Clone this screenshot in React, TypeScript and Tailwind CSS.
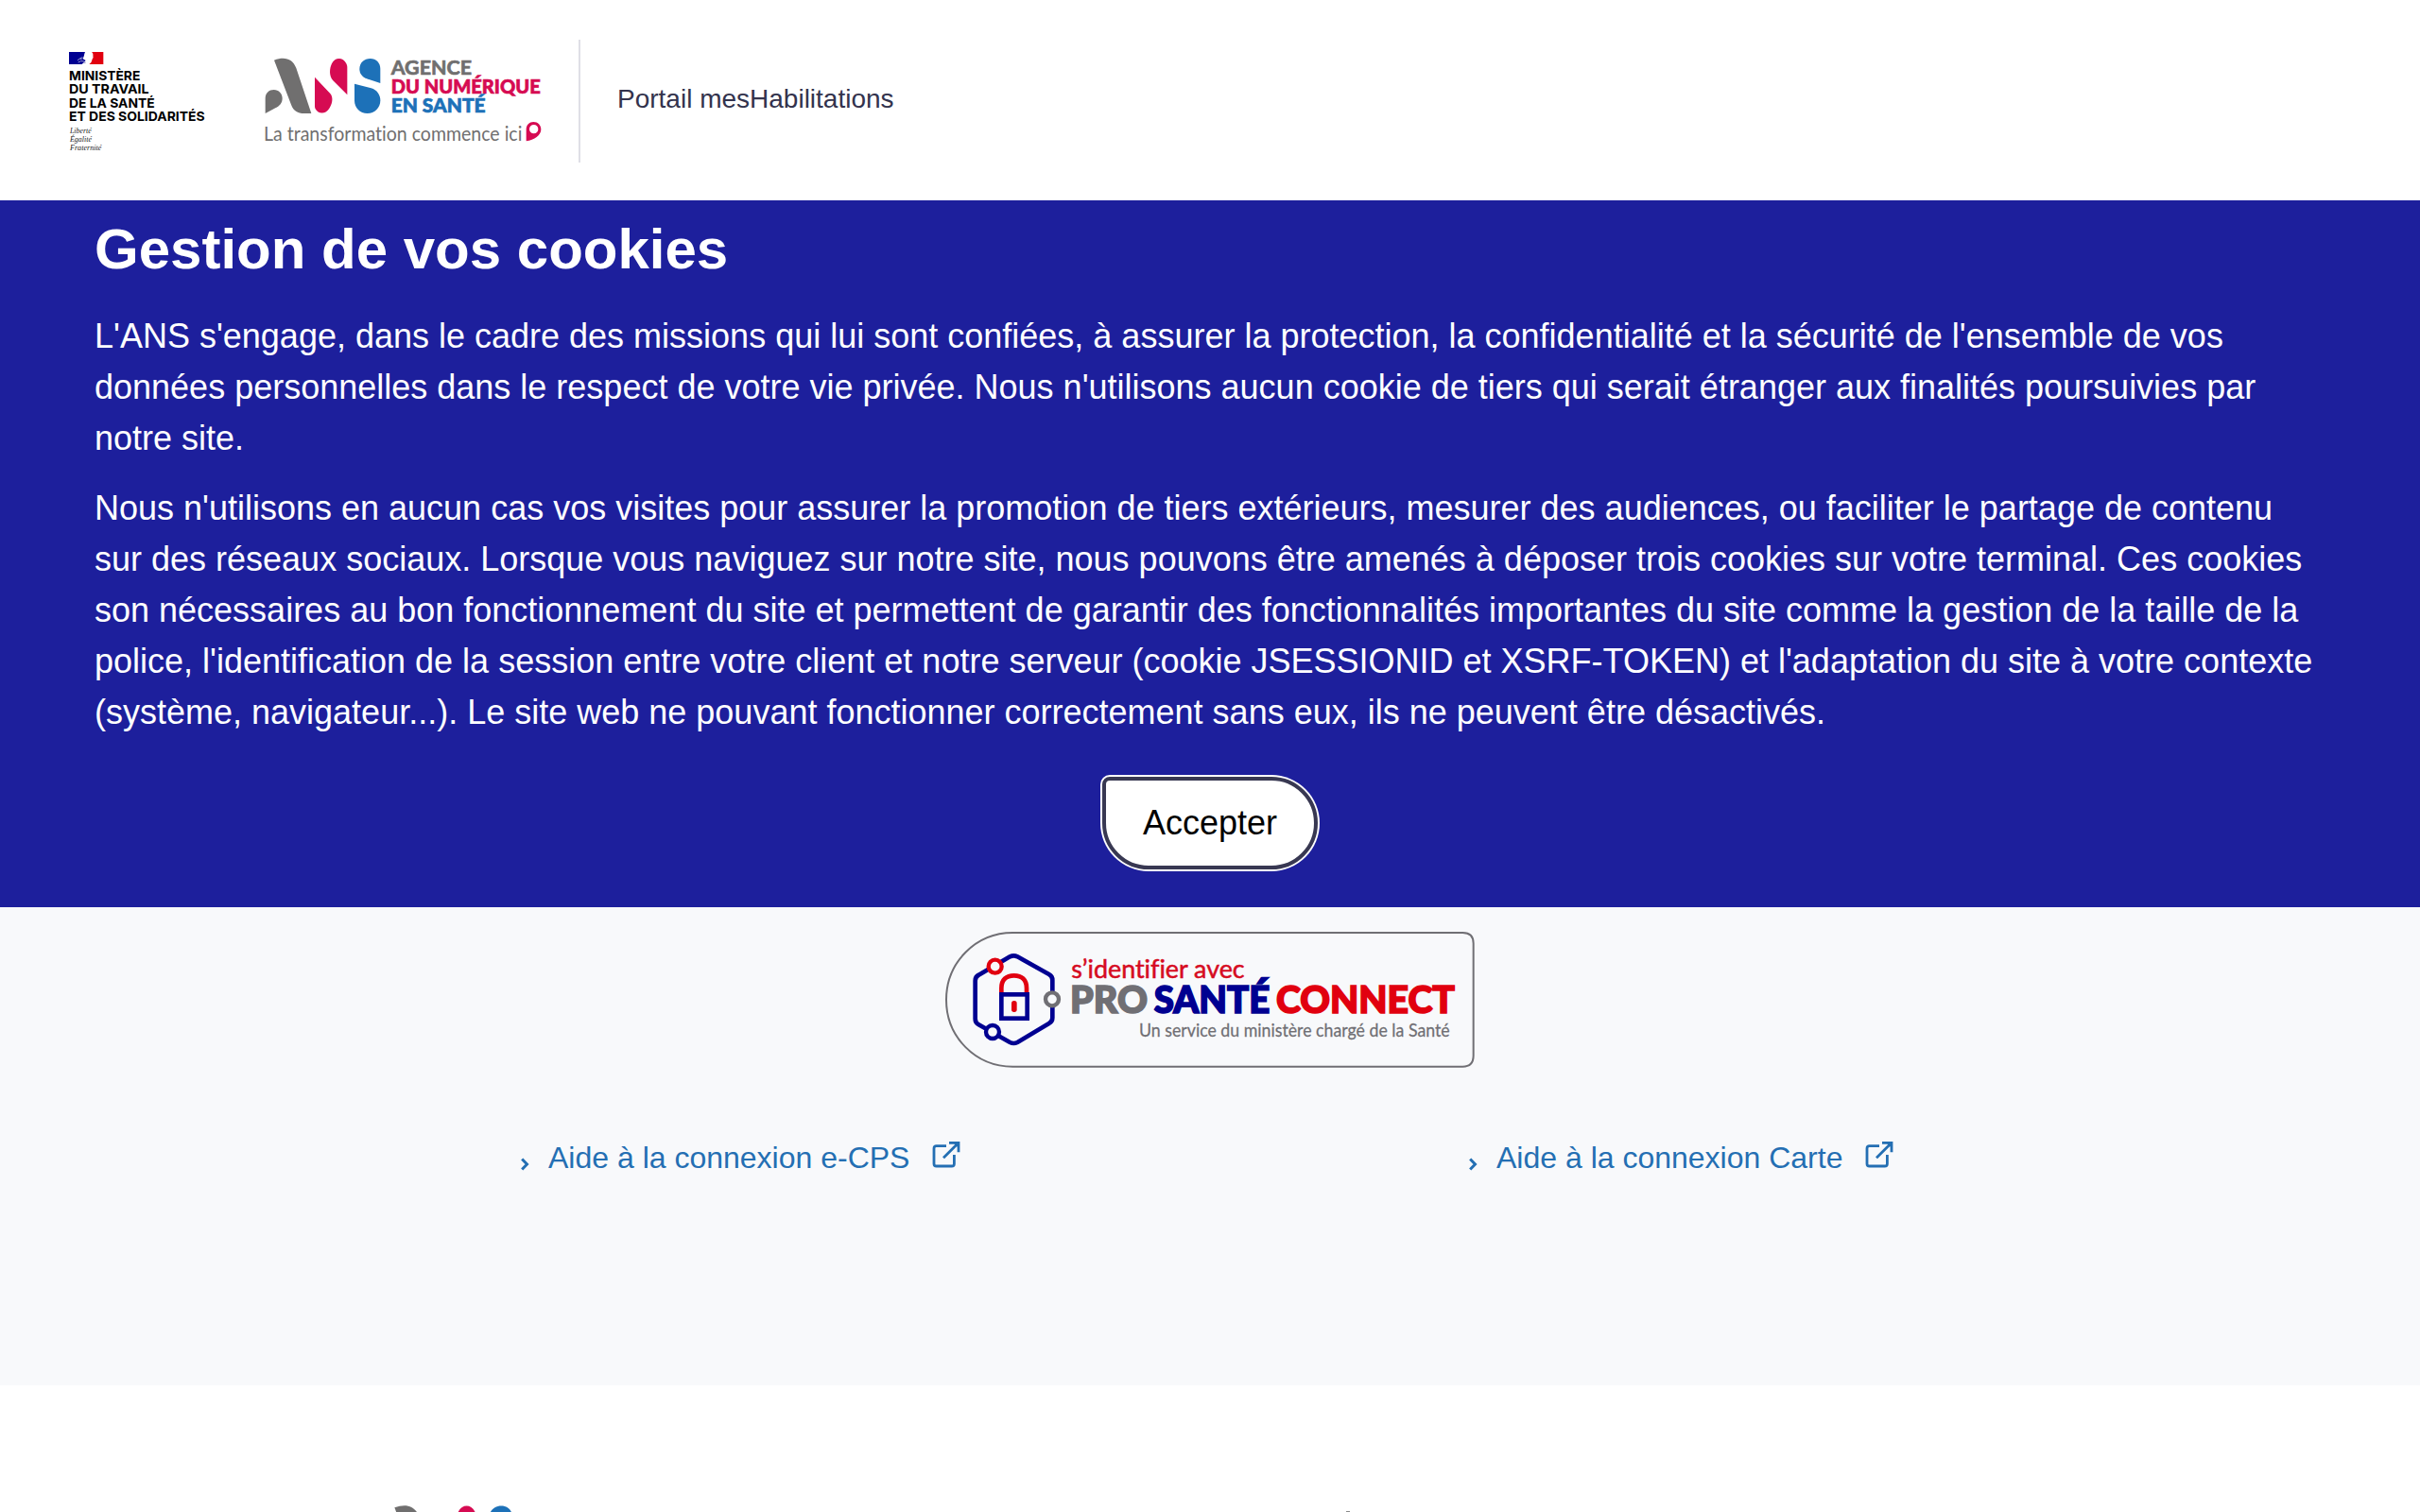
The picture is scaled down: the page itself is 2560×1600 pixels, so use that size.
import React from "react";

function MinistryLogo() {
  const lines = [
    { t: "MINISTÈRE", y: 135, w: 226 },
    { t: "DU TRAVAIL", y: 178, w: 254 },
    { t: "DE LA SANTÉ", y: 221, w: 272 },
    { t: "ET DES SOLIDARITÉS", y: 265, w: 431 },
  ];
  const motto = [
    { t: "Liberté", y: 302, w: 68 },
    { t: "Égalité", y: 329, w: 69 },
    { t: "Fraternité", y: 356, w: 100 },
  ];
  return (
    <svg width="200" height="130" viewBox="0 0 600 390" className="shrink-0">
      <path d="M69 45H120C116 53 118 60 112 66L122 72L110 84H69Z" fill="#000091" />
      <path d="M141 45H178V84H133C144 77 140 69 146 63C144 57 148 51 141 45Z" fill="#e1000f" />
      <path d="M96 72Q102 63 110 68M98 78Q106 71 117 75M104 65L112 62M114 80L122 79" stroke="#9a9ad0" strokeWidth="3" fill="none" />
      <g fill="#000" fontFamily="Inter, sans-serif" fontWeight="700" fontSize="41">
        {lines.map((l) => (
          <text key={l.t} x="69" y={l.y} textLength={l.w} lengthAdjust="spacingAndGlyphs">
            {l.t}
          </text>
        ))}
      </g>
      <g fill="#222" fontFamily="'Liberation Serif', serif" fontStyle="italic" fontSize="24">
        {motto.map((l) => (
          <text key={l.t} x="72" y={l.y} textLength={l.w} lengthAdjust="spacingAndGlyphs">
            {l.t}
          </text>
        ))}
      </g>
    </svg>
  );
}

function AnsMark() {
  return (
    <g>
      <path d="M90 71C124 58 149 67 160 96L208 240H186C164 240 151 231 144 212Z" fill="#706f6f" />
      <path d="M62 240V193C62 175 74 165 89 165C105 165 116 177 116 192C116 207 108 216 94 223Z" fill="#706f6f" />
      <path d="M219 125L268 177C280 191 273 213 264 226C253 243 230 243 221 226C219 222 219 218 219 214Z" fill="#d60b52" />
      <path d="M322 181L277 136C263 121 266 96 273 82C283 61 309 61 319 82C322 88 322 92 322 97Z" fill="#d60b52" />
      <path d="M427 144L384 130C368 124 361 112 361 99C361 79 376 66 395 66C414 66 427 80 427 99Z" fill="#1d71b8" />
      <path d="M345 146L398 160C416 165 427 181 427 199C427 223 409 240 386 240C362 240 345 223 345 199Z" fill="#1d71b8" />
    </g>
  );
}

function AnsLogo() {
  return (
    <svg width="340" height="140" viewBox="0 0 1020 420" className="shrink-0 [font-variant-ligatures:none]">
      <AnsMark />
      <g fontFamily="Lato, sans-serif" fontWeight="900" fontSize="62" strokeWidth="2">
        <text x="461" y="117" fill="#706f6f" stroke="#706f6f" fontWeight="700" textLength="256" lengthAdjust="spacingAndGlyphs">AGENCE</text>
        <text x="461" y="178" fill="#d60b52" stroke="#d60b52" textLength="474" lengthAdjust="spacingAndGlyphs">DU NUMÉRIQUE</text>
        <text x="461" y="238" fill="#1d71b8" stroke="#1d71b8" textLength="300" lengthAdjust="spacingAndGlyphs">EN SANTÉ</text>
      </g>
      <text x="57" y="328" fill="#706f6f" fontFamily="Lato, sans-serif" fontSize="65" textLength="820" lengthAdjust="spacingAndGlyphs">
        La transformation commence ici
      </text>
      <path fillRule="evenodd" d="M890 328V291C890 276 900 267 913 267C927 267 937 277 937 291C937 309 916 325 890 328ZM914 276A14 14 0 1 0 914 304A14 14 0 1 0 914 276Z" fill="#d60b52" />
    </svg>
  );
}

function ProSanteConnect() {
  return (
    <svg width="560" height="144" viewBox="0 0 1680 432" className="[font-variant-ligatures:none]">
      <path d="M214 3H1642Q1676 3 1676 37V393Q1676 428 1642 428H214C96 428 3 334 3 216C3 98 96 3 214 3Z" fill="none" stroke="#706f74" strokeWidth="6" />
      <path d="M205 79Q217 73 229 79L329 135Q340 141 340 153V273Q340 285 329 291L229 351Q217 357 205 351L106 295Q95 289 95 277V155Q95 143 106 137Z" fill="none" stroke="#000091" strokeWidth="14" />
      <circle cx="158" cy="110" r="21" fill="#f8f9fb" stroke="#e1000f" strokeWidth="13" />
      <circle cx="150" cy="318" r="21" fill="#f8f9fb" stroke="#000091" strokeWidth="13" />
      <circle cx="339" cy="214" r="21" fill="#f8f9fb" stroke="#706f74" strokeWidth="13" />
      <path d="M178 194V179C178 151 194 139 218 139C242 139 258 151 258 179V194" fill="none" stroke="#e1000f" strokeWidth="14" />
      <rect x="178" y="199" width="82" height="76" fill="none" stroke="#000091" strokeWidth="14" />
      <rect x="210" y="219" width="17" height="36" rx="8" fill="#e1000f" />
      <g fontFamily="Lato, sans-serif">
        <text x="400" y="147" fontSize="78" fill="#d60b1f" stroke="#d60b1f" strokeWidth="1.5" textLength="550" lengthAdjust="spacingAndGlyphs">s’identifier avec</text>
        <g fontWeight="900" fontSize="119" strokeWidth="5">
          <text x="396" y="258" fill="#706f74" stroke="#706f74" textLength="246" lengthAdjust="spacingAndGlyphs">PRO</text>
          <text x="662" y="258" fill="#000091" stroke="#000091" textLength="368" lengthAdjust="spacingAndGlyphs">SANTÉ</text>
          <text x="1050" y="258" fill="#e1000f" stroke="#e1000f" textLength="567" lengthAdjust="spacingAndGlyphs">CONNECT</text>
        </g>
        <text x="615" y="334" fontSize="60" fill="#706f74" stroke="#706f74" strokeWidth="0.8" textLength="986" lengthAdjust="spacingAndGlyphs">Un service du ministère chargé de la Santé</text>
      </g>
    </svg>
  );
}

function HelpLink({ label }: { label: string }) {
  return (
    <a href="#" className="flex items-start text-[32px] leading-[48px] text-[#246fb3]">
      <svg width="10" height="14" viewBox="0 0 10 14" className="mt-[24px] mr-[19px] shrink-0" fill="none" stroke="currentColor" strokeWidth="3">
        <path d="M1.2 1.5L6.500 7L1.200 12.500" />
      </svg>
      <span className="whitespace-nowrap">{label}</span>
      <svg width="30" height="30" viewBox="0 0 30 30" className="mt-[6px] ml-[24px] shrink-0" fill="none" stroke="currentColor" strokeWidth="2.8">
        <path d="M15 5.6H4.6Q2 5.6 2 8.200V24.400Q2 27 4.600 27H20.800Q23.400 27 23.400 24.400V15" />
        <path d="M12 18.200L27.500 2.700M18 2.400H28V12.300" />
        <path d="M22 2H28.300V8Z" fill="currentColor" stroke="none" />
      </svg>
    </a>
  );
}

export default function App() {
  return (
    <div className="flex h-[1600px] w-[2560px] flex-col overflow-hidden bg-white font-['Liberation_Sans',Arial,sans-serif]">
      <header className="flex h-[212px] shrink-0 items-start pt-[40px] pl-[50px]">
        <MinistryLogo />
        <div className="ml-[10px] flex">
          <AnsLogo />
        </div>
        <div className="mt-[2px] ml-[12px] h-[130px] w-[2px] bg-[#dfdfe6]" />
        <p className="mt-[44px] ml-[39px] text-[28px] leading-[42px] text-[#33334d]">Portail mesHabilitations</p>
      </header>

      <section className="flex h-[748px] shrink-0 flex-col bg-[#1d1f9c] px-[100px] pt-[16px] text-white">
        <h1 className="text-[60px] leading-[72px] font-bold">Gestion de vos cookies</h1>
        <div className="mt-[29px] flex flex-col gap-[20px] text-[36px] leading-[54px]">
          <p className="whitespace-nowrap">
            L'ANS s'engage, dans le cadre des missions qui lui sont confiées, à assurer la protection, la confidentialité et la sécurité de l'ensemble de vos
            <br />
            données personnelles dans le respect de votre vie privée. Nous n'utilisons aucun cookie de tiers qui serait étranger aux finalités poursuivies par
            <br />
            notre site.
          </p>
          <p className="whitespace-nowrap">
            Nous n'utilisons en aucun cas vos visites pour assurer la promotion de tiers extérieurs, mesurer des audiences, ou faciliter le partage de contenu
            <br />
            sur des réseaux sociaux. Lorsque vous naviguez sur notre site, nous pouvons être amenés à déposer trois cookies sur votre terminal. Ces cookies
            <br />
            son nécessaires au bon fonctionnement du site et permettent de garantir des fonctionnalités importantes du site comme la gestion de la taille de la
            <br />
            police, l'identification de la session entre votre client et notre serveur (cookie JSESSIONID et XSRF-TOKEN) et l'adaptation du site à votre contexte
            <br />
            (système, navigateur...). Le site web ne pouvant fonctionner correctement sans eux, ils ne peuvent être désactivés.
          </p>
        </div>
        <button className="mt-[41px] h-[98px] w-[228px] self-center rounded-[49px] rounded-tl-[8px] border-4 border-[#383852] bg-white text-[36px] leading-[54px] text-black ring-2 ring-white">
          Accepter
        </button>
      </section>

      <main className="flex h-[506px] shrink-0 flex-col bg-[#f8f9fb] pt-[26px]">
        <div className="flex justify-center">
          <ProSanteConnect />
        </div>
        <div className="mt-[71px] grid grid-cols-[1003px_1003px] pl-[551px]">
          <HelpLink label="Aide à la connexion e-CPS" />
          <HelpLink label="Aide à la connexion Carte" />
        </div>
      </main>

      <footer className="flex h-[134px] shrink-0 items-start overflow-hidden bg-white pt-[103px] pl-[384px]">
        <svg width="177.800" height="155.500" viewBox="0 0 480 420" className="shrink-0">
          <AnsMark />
        </svg>
        <div className="mt-[30px] ml-[862px] h-px w-[4px] bg-[#8a8a8a]" />
      </footer>
    </div>
  );
}
